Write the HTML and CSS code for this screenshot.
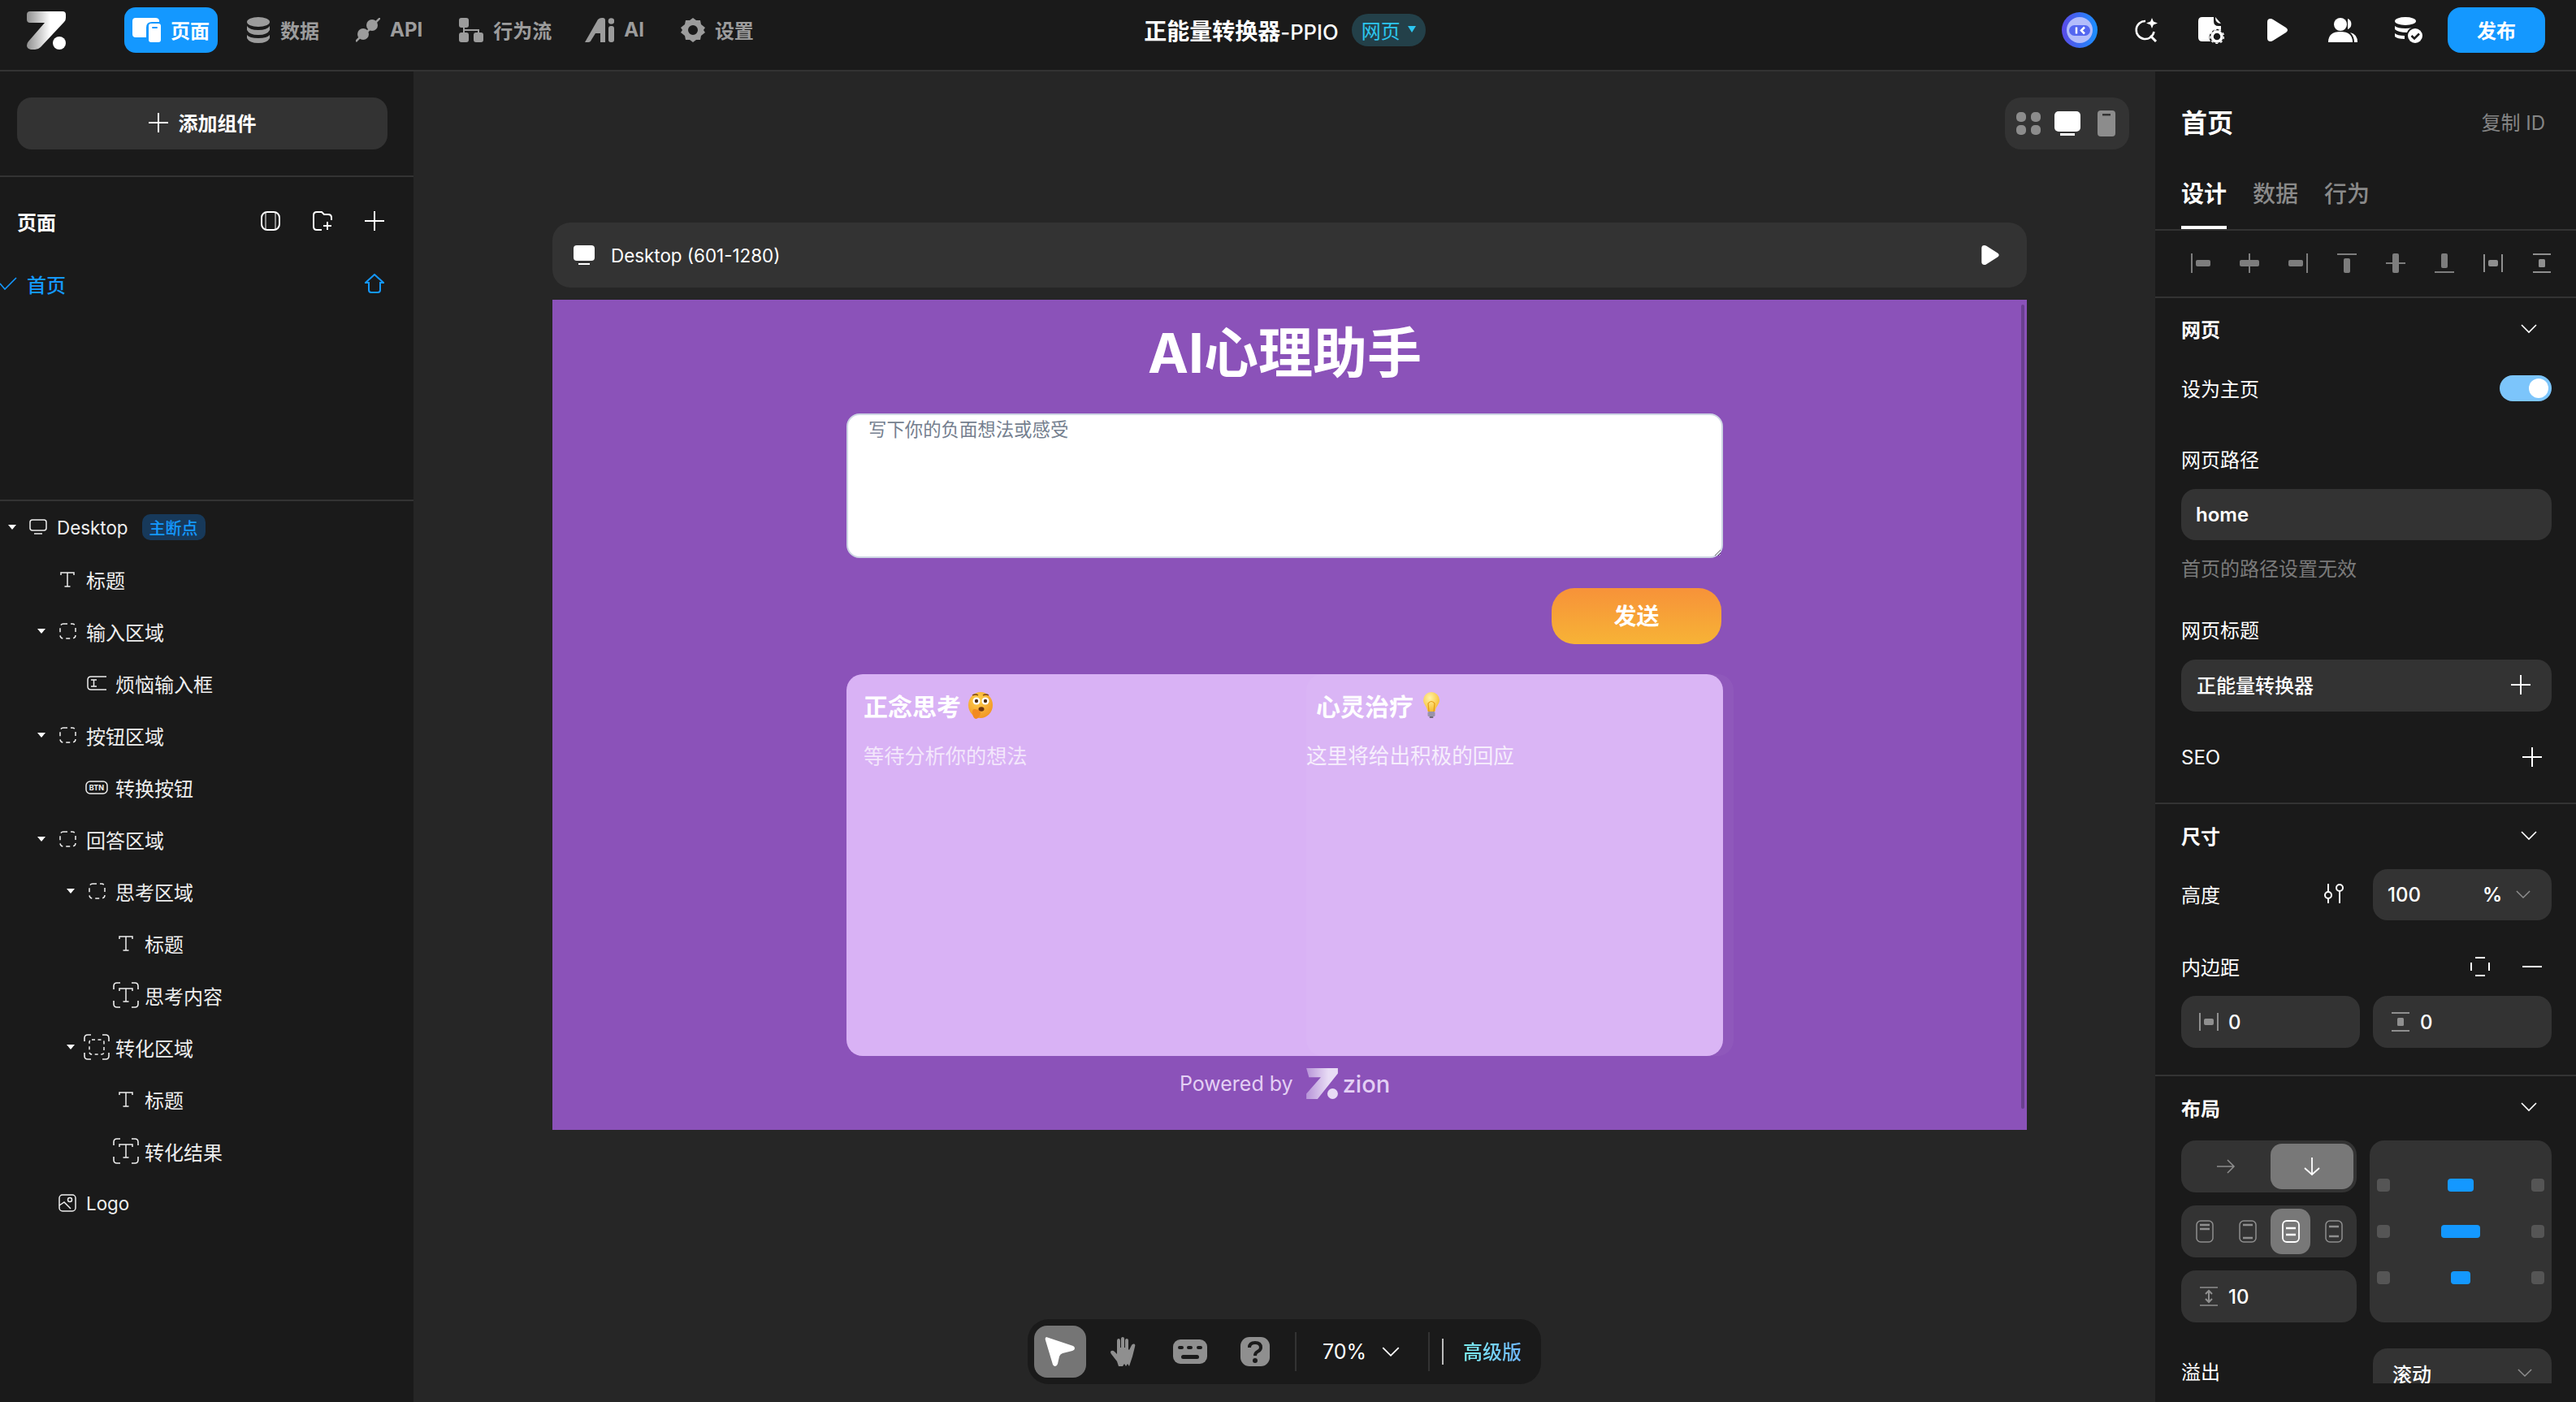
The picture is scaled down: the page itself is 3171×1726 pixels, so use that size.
FILE: index.html
```html
<!DOCTYPE html>
<html lang="zh-CN">
<head>
  <meta charset="UTF-8" />
  <title>正能量转换器-PPIO</title>
  <link rel="stylesheet" href="styles.css">
</head>
<body>
  <svg class="sprite" xmlns="http://www.w3.org/2000/svg">
    <defs>
      <linearGradient id="logoGrad" x1="0" y1="0" x2="1" y2="0">
        <stop offset="0" stop-color="#8f8f8f"/><stop offset="0.6" stop-color="#fff"/>
      </linearGradient>
      <linearGradient id="zionGrad" x1="0" y1="0" x2="1" y2="0">
        <stop offset="0" stop-color="#b794d8"/><stop offset="0.7" stop-color="#e8dcf5"/>
      </linearGradient>
      <linearGradient id="avatarGrad" x1="0" y1="0.5" x2="1" y2="0.5">
        <stop offset="0" stop-color="#5b4ae6"/><stop offset="1" stop-color="#1a90ff"/>
      </linearGradient>
      <radialGradient id="faceGrad" cx="0.4" cy="0.3" r="0.8">
        <stop offset="0" stop-color="#ffd24e"/><stop offset="1" stop-color="#f0901f"/>
      </radialGradient>
      <radialGradient id="bulbGrad" cx="0.4" cy="0.3" r="0.8">
        <stop offset="0" stop-color="#fff3a8"/><stop offset="1" stop-color="#f6b51e"/>
      </radialGradient>

      <symbol id="i-chev" viewBox="0 0 20 12"><path d="M1 1l9 9 9-9" fill="none" stroke="currentColor" stroke-width="1.6"/></symbol>
      <symbol id="i-plus" viewBox="0 0 24 24"><path d="M12 0v24M0 12h24" fill="none" stroke="currentColor" stroke-width="2"/></symbol>
      <symbol id="i-frame" viewBox="0 0 21 20"><rect x="1" y="1" width="19" height="18" rx="4" fill="none" stroke="currentColor" stroke-width="1.5" stroke-dasharray="5 4"/></symbol>
      <symbol id="i-t" viewBox="0 0 18 19"><path d="M1 4V1h16v3M9 1v17M5.500 18h7" fill="none" stroke="currentColor" stroke-width="1.5"/></symbol>
      <symbol id="i-tframe" viewBox="0 0 32 32"><path d="M1 9V5q0-4 4-4h4M23 1h4q4 0 4 4v4M31 23v4q0 4-4 4h-4M9 31H5q-4 0-4-4v-4" fill="none" stroke="currentColor" stroke-width="1.6"/><path d="M8 11V8h16v3M16 8v16M12.500 24h7" fill="none" stroke="currentColor" stroke-width="1.5"/></symbol>
      <symbol id="i-fframe" viewBox="0 0 32 32"><path d="M1 9V5q0-4 4-4h4M23 1h4q4 0 4 4v4M31 23v4q0 4-4 4h-4M9 31H5q-4 0-4-4v-4" fill="none" stroke="currentColor" stroke-width="1.6"/><rect x="7" y="7" width="18" height="18" rx="3" fill="none" stroke="currentColor" stroke-width="1.5" stroke-dasharray="4 3.500"/></symbol>
      <symbol id="i-gather" viewBox="0 0 24 24"><path d="M1 1v22M23 1v22" fill="none" stroke="currentColor" stroke-width="2"/><rect x="6" y="8" width="12" height="8" rx="2" fill="currentColor"/></symbol>
      <symbol id="i-gapv" viewBox="0 0 24 24"><path d="M1 1h22M1 23h22" fill="none" stroke="currentColor" stroke-width="2"/><rect x="8" y="7" width="8" height="10" rx="1.500" fill="currentColor"/></symbol>
    </defs>
  </svg>

  <div class="app">
    <header class="topbar">
      <div class="topbar-left">
        <svg class="logo" viewBox="0 0 48 47"><path d="M4 0h40q4 0 4 4v4q0 3-2 5L17 44q-3 3-7 3H5q-5-1-5-5 0-3 2-5L22 14H4q-4 0-4-4V4q0-4 4-4z" fill="url(#logoGrad)"/><circle cx="40" cy="39" r="8" fill="#fff"/></svg>
        <nav class="nav">
          <a class="nav-item active">
            <svg width="35" height="30" viewBox="0 0 35 30"><path d="M4 0h24q5 0 5 4v1H24q-7 0-7 7v12H4q-4 0-4-4V4q0-4 4-4z" fill="currentColor"/><rect x="20" y="7" width="15" height="23" rx="3" fill="currentColor"/><rect x="24" y="11" width="7" height="2" rx="1" fill="#1498ff"/></svg>
            页面
          </a>
          <a class="nav-item">
            <svg width="30" height="32" viewBox="0 0 30 32"><ellipse cx="15" cy="6" rx="14" ry="6" fill="currentColor"/><path d="M1 11q3 5 14 5t14-5v5q-3 6-14 6T1 16z" fill="currentColor"/><path d="M1 22q3 4 14 4t14-4v4q-3 6-14 6T1 26z" fill="currentColor"/></svg>
            数据
          </a>
          <a class="nav-item">
            <svg width="30" height="30" viewBox="0 0 30 30"><circle cx="9" cy="20" r="7" fill="currentColor"/><circle cx="20" cy="9" r="7" fill="currentColor"/><path d="M24 6l6-6M6 23l-6 6M14 17l3-3" stroke="currentColor" stroke-width="2.500"/></svg>
            API
          </a>
          <a class="nav-item">
            <svg width="30" height="30" viewBox="0 0 30 30"><rect x="0" y="0" width="12" height="12" rx="3" fill="currentColor"/><rect x="0" y="18" width="12" height="12" rx="3" fill="currentColor"/><rect x="18" y="18" width="12" height="12" rx="3" fill="currentColor"/><path d="M6 12v6M6 15h18v3" fill="none" stroke="currentColor" stroke-width="2"/></svg>
            行为流
          </a>
          <a class="nav-item nav-ai">
            <svg width="36" height="30" viewBox="0 0 36 30"><path d="M0 30L16 2q2-2 5-2h1q3 0 3 3v27h-6v-11h-6l-5 8q-1 3-4 3z" fill="currentColor"/><rect x="29" y="10" width="7" height="20" rx="3" fill="currentColor"/><circle cx="32.500" cy="4" r="3.800" fill="currentColor"/></svg>
            AI
          </a>
          <a class="nav-item">
            <svg width="30" height="30" viewBox="0 0 30 30"><path fill-rule="evenodd" d="M15 0l4 3 5 0 1 5 5 4-2 3 2 3-5 4-1 5-5 0-4 3-4-3-5 0-1-5-5-4 2-3-2-3 5-4 1-5 5 0zM15 9a6 6 0 100 12 6 6 0 000-12z" fill="currentColor"/></svg>
            设置
          </a>
        </nav>
      </div>

      <div class="topbar-center">
        <span class="app-name">正能量转换器<span class="app-suffix">-PPIO</span></span>
        <span class="app-type">网页<i class="app-type-arrow"></i></span>
      </div>

      <div class="topbar-right">
        <span class="top-icon">
          <svg width="44" height="44" viewBox="0 0 44 44"><circle cx="22" cy="22" r="22" fill="url(#avatarGrad)"/><circle cx="22" cy="22" r="16" fill="#b3bdfb"/><rect x="9" y="16" width="26" height="13" rx="6.500" fill="#5467f0"/><path d="M18 18.500v8" stroke="#fff" stroke-width="2.500"/><path d="M28 18.500l-4 4 4 4" fill="none" stroke="#fff" stroke-width="2.500"/></svg>
        </span>
        <span class="top-icon">
          <svg width="30" height="30" viewBox="0 0 30 30"><path d="M15 4a11 11 0 1010.500 13" fill="none" stroke="#fff" stroke-width="2.500"/><path d="M21 22l7 7" stroke="#fff" stroke-width="3"/><path d="M23 0l1.800 4.500L30 6.500 24.800 8.500 23 13l-1.800-4.500L16 6.500l5.200-2z" fill="#fff"/></svg>
        </span>
        <span class="top-icon">
          <svg width="32" height="33" viewBox="0 0 32 33"><path d="M5 0h14v5q0 6 6 6h3v5a10 10 0 00-13 14H5q-5 0-5-5V5q0-5 5-5z" fill="#fff"/><path d="M21 0l7 8q-7 0-7-8z" fill="#fff"/><circle cx="23" cy="24" r="6" fill="none" stroke="#fff" stroke-width="3.500"/><circle cx="23" cy="24" r="8.500" fill="none" stroke="#fff" stroke-width="1.500" stroke-dasharray="3 3"/></svg>
        </span>
        <span class="top-icon">
          <svg width="25" height="28" viewBox="0 0 25 28"><path d="M0 4q0-4 4-4 1.500 0 3 1l16 10q2 1.500 2 3t-2 3L7 27q-1.500 1-3 1-4 0-4-4z" fill="#fff"/></svg>
        </span>
        <span class="top-icon">
          <svg width="36" height="30" viewBox="0 0 36 30"><circle cx="15" cy="8" r="8" fill="#fff"/><path d="M0 30q0-13 15-13t15 13z" fill="#fff"/><path d="M24 1a7 7 0 010 13z" fill="#fff"/><path d="M27 18q9 2 9 12h-4q0-7-5-12z" fill="#fff"/></svg>
        </span>
        <span class="top-icon">
          <svg width="34" height="32" viewBox="0 0 34 32"><ellipse cx="13" cy="5" rx="13" ry="5" fill="#fff"/><path d="M0 11q3 3 13 3 5 0 8-1-4 1-6 6-11 0-15-4zM0 20q3 3 12 3v4Q3 27 0 24z" fill="#fff"/><circle cx="25" cy="23" r="9" fill="#fff"/><path d="M20.500 23l3.500 3.500 6-6" fill="none" stroke="#1a1a1a" stroke-width="2.500"/></svg>
        </span>
        <button class="publish">发布</button>
      </div>
    </header>

    <aside class="left-panel">
      <div class="add-area">
        <button class="add-btn"><svg width="24" height="24"><use href="#i-plus"/></svg>添加组件</button>
      </div>
      <div class="pages">
        <div class="pages-head">
          <b>页面</b>
          <div class="pages-tools">
            <svg width="24" height="24" viewBox="0 0 24 24"><rect x="1" y="1" width="22" height="22" rx="7" fill="none" stroke="#fff" stroke-width="2"/><path d="M6 1v22M18 1v22" fill="none" stroke="#fff" stroke-width="1"/></svg>
            <svg width="24" height="24" viewBox="0 0 24 24"><path d="M11 23H5q-4 0-4-4V5q0-4 4-4h6l3 3h5q4 0 4 4v3" fill="none" stroke="#fff" stroke-width="2"/><path d="M18 13v10M13 18h10" stroke="#fff" stroke-width="2"/></svg>
            <svg width="24" height="24"><use href="#i-plus"/></svg>
          </div>
        </div>
        <div class="page-row">
          <svg class="page-check" width="21" height="16" viewBox="0 0 21 16"><path d="M0 8l6 7L20 1" fill="none" stroke="#1498ff" stroke-width="1.600"/></svg>
          <span>首页</span>
          <svg class="page-home" width="24" height="24" viewBox="0 0 24 24"><path d="M1 11L12 1l11 10h-4v9q0 3-3 3H8q-3 0-3-3v-9z" fill="none" stroke="#1498ff" stroke-width="2"/></svg>
        </div>
      </div>
      <div class="tree">
        <div class="tree-row lv0"><i class="tree-arrow"></i><span class="tree-icon"><svg width="22" height="20" viewBox="0 0 22 20"><rect x="1" y="1" width="20" height="13" rx="3" fill="none" stroke="currentColor" stroke-width="1.500"/><path d="M6 18h10" stroke="currentColor" stroke-width="1.500"/></svg></span><span class="latin">Desktop</span><em class="main-tag">主断点</em></div>
        <div class="tree-row lv1"><i class="tree-slot"></i><span class="tree-icon"><svg width="18" height="19"><use href="#i-t"/></svg></span><span>标题</span></div>
        <div class="tree-row lv1"><i class="tree-arrow"></i><span class="tree-icon"><svg width="21" height="20"><use href="#i-frame"/></svg></span><span>输入区域</span></div>
        <div class="tree-row lv2"><i class="tree-slot"></i><span class="tree-icon"><svg width="25" height="18" viewBox="0 0 25 18"><path d="M24 1H5Q1 1 1 5v8q0 4 4 4h19" fill="none" stroke="currentColor" stroke-width="1.500"/><path d="M5 5h7M8.500 5v8M5 13h7" fill="none" stroke="currentColor" stroke-width="1.500"/></svg></span><span>烦恼输入框</span></div>
        <div class="tree-row lv1"><i class="tree-arrow"></i><span class="tree-icon"><svg width="21" height="20"><use href="#i-frame"/></svg></span><span>按钮区域</span></div>
        <div class="tree-row lv2"><i class="tree-slot"></i><span class="tree-icon"><svg width="28" height="17" viewBox="0 0 28 17"><rect x="1" y="1" width="26" height="15" rx="5" fill="none" stroke="currentColor" stroke-width="1.500"/><text x="14" y="12" font-size="9" font-weight="700" text-anchor="middle" fill="currentColor" font-family="Inter, sans-serif">BTN</text></svg></span><span>转换按钮</span></div>
        <div class="tree-row lv1"><i class="tree-arrow"></i><span class="tree-icon"><svg width="21" height="20"><use href="#i-frame"/></svg></span><span>回答区域</span></div>
        <div class="tree-row lv2"><i class="tree-arrow"></i><span class="tree-icon"><svg width="21" height="20"><use href="#i-frame"/></svg></span><span>思考区域</span></div>
        <div class="tree-row lv3"><i class="tree-slot"></i><span class="tree-icon"><svg width="18" height="19"><use href="#i-t"/></svg></span><span>标题</span></div>
        <div class="tree-row lv3"><i class="tree-slot"></i><span class="tree-icon"><svg width="32" height="32"><use href="#i-tframe"/></svg></span><span>思考内容</span></div>
        <div class="tree-row lv2"><i class="tree-arrow"></i><span class="tree-icon"><svg width="32" height="32"><use href="#i-fframe"/></svg></span><span>转化区域</span></div>
        <div class="tree-row lv3"><i class="tree-slot"></i><span class="tree-icon"><svg width="18" height="19"><use href="#i-t"/></svg></span><span>标题</span></div>
        <div class="tree-row lv3"><i class="tree-slot"></i><span class="tree-icon"><svg width="32" height="32"><use href="#i-tframe"/></svg></span><span>转化结果</span></div>
        <div class="tree-row lv1"><i class="tree-slot"></i><span class="tree-icon"><svg width="22" height="22" viewBox="0 0 22 22"><rect x="1" y="1" width="20" height="20" rx="4" fill="none" stroke="currentColor" stroke-width="1.500"/><circle cx="14" cy="7" r="2.500" fill="none" stroke="currentColor" stroke-width="1.500"/><path d="M1 14l6-4 8 8" fill="none" stroke="currentColor" stroke-width="1.500"/></svg></span><span class="latin">Logo</span></div>
      </div>
    </aside>

    <main class="canvas">
      <div class="view-switch">
        <span class="view-btn"><svg width="32" height="30" viewBox="0 0 32 30"><rect x="1" y="1" width="12" height="12" rx="5" fill="#8c8c8c"/><rect x="19" y="1" width="12" height="12" rx="5" fill="#8c8c8c"/><rect x="1" y="17" width="12" height="12" rx="5" fill="#8c8c8c"/><rect x="19" y="17" width="12" height="12" rx="5" fill="#8c8c8c"/></svg></span>
        <span class="view-btn"><svg width="32" height="30" viewBox="0 0 32 30"><rect x="0" y="0" width="32" height="25" rx="5" fill="#fff"/><rect x="7" y="27" width="18" height="3" fill="#fff"/></svg></span>
        <span class="view-btn"><svg width="22" height="32" viewBox="0 0 22 32"><rect x="0" y="0" width="22" height="32" rx="4" fill="#8c8c8c"/><rect x="6" y="4" width="10" height="2.500" fill="#333"/></svg></span>
      </div>

      <div class="bp-bar">
        <svg width="26" height="26" viewBox="0 0 26 26"><rect x="0" y="1" width="26" height="19" rx="4" fill="#fff"/><rect x="6" y="23" width="14" height="2" fill="#fff"/></svg>
        <span class="latin">Desktop (601-1280)</span>
        <svg class="bp-play" width="22" height="24" viewBox="0 0 25 28"><path d="M0 4q0-4 4-4 1.500 0 3 1l16 10q2 1.500 2 3t-2 3L7 27q-1.500 1-3 1-4 0-4-4z" fill="#fff"/></svg>
      </div>

      <section class="page">
        <i class="page-scroll"></i>
        <h1 class="page-title">AI心理助手</h1>
        <textarea class="worry-input" placeholder="写下你的负面想法或感受"></textarea>
        <button class="send-btn">发送</button>
        <div class="answers">
          <div class="answer answer-left">
            <h3>正念思考
              <svg width="32" height="33" viewBox="0 0 32 33"><ellipse cx="16" cy="16" rx="15" ry="16" fill="url(#faceGrad)"/><circle cx="11" cy="11" r="4.500" fill="#fff"/><circle cx="22" cy="11" r="4.500" fill="#fff"/><circle cx="11" cy="11" r="2.200" fill="#4a2c12"/><circle cx="22" cy="11" r="2.200" fill="#4a2c12"/><path d="M6 4q4-2 7 0M19 4q4-2 7 0" fill="none" stroke="#7a4310" stroke-width="1.300"/><ellipse cx="17" cy="21" rx="3.500" ry="2.800" fill="#6d3410"/><path d="M6 24q0-3 3-3l4 1q3 1 3 3t-1 4q-2 4-5 4-4-1-4-9z" fill="#f28a1f"/></svg>
            </h3>
            <p>等待分析你的想法</p>
          </div>
          <div class="answer answer-right">
            <h3>心灵治疗
              <svg width="20" height="32" viewBox="0 0 20 32"><path d="M10 0a10 10 0 00-10 10c0 5 5 8 5.500 14h9C15 18 20 15 20 10A10 10 0 0010 0z" fill="url(#bulbGrad)"/><path d="M7 24l-1-10q4-5 8 0l-1 10" fill="none" stroke="#e39a14" stroke-width="1.200"/><rect x="5.500" y="24" width="9" height="6" rx="1.500" fill="#9a93a8"/><rect x="7.500" y="30" width="5" height="2" rx="1" fill="#6f6a78"/></svg>
            </h3>
            <p>这里将给出积极的回应</p>
          </div>
        </div>
        <div class="powered">
          <span>Powered by</span>
          <svg width="41" height="38" viewBox="0 0 48 47"><path d="M0 0h48v8L17 47H0v-8L22 14H4z" fill="url(#zionGrad)"/><circle cx="40" cy="39" r="8" fill="#e8dcf5"/></svg>
          <span class="zion">zion</span>
        </div>
      </section>

      <div class="tools">
        <span class="tool selected"><svg width="38" height="38" viewBox="0 0 38 38"><path d="M2 1q-2 1-1 4l9 30q1 2 3 2t3-3l2-9q1-3 4-4l12-3q3-1 3-3t-2-3z" fill="#fff"/></svg></span>
        <span class="tool"><svg width="36" height="36" viewBox="0 0 36 36"><path d="M10 36l-2-6-7-9q-2-3 0-4t4 1l3 3V5q0-3 2-3t2 3v8h1V2q0-2 2-2t2 2v11h1V4q0-2 2-2t2 2v11l1 1 3-6q1-2 3-1.500t1 3.500l-3 12-4 12-2-3-2 3-2-3-2 3z" fill="#8f8f8f"/></svg></span>
        <span class="tool"><svg width="42" height="30" viewBox="0 0 42 30"><rect width="42" height="30" rx="9" fill="#8f8f8f"/><g fill="#1a1a1a"><rect x="6" y="8" width="7" height="4" rx="2"/><rect x="17" y="8" width="7" height="4" rx="2"/><rect x="29" y="8" width="7" height="4" rx="2"/><rect x="10" y="19" width="22" height="5" rx="2.500"/></g></svg></span>
        <span class="tool"><svg width="36" height="36" viewBox="0 0 36 36"><rect width="36" height="36" rx="11" fill="#8f8f8f"/><path d="M11 13q0-6 7-6t7 6q0 3-4 5-3 1.500-3 5" fill="none" stroke="#1a1a1a" stroke-width="4"/><circle cx="18" cy="29" r="3" fill="#1a1a1a"/></svg></span>
        <i class="tool-sep"></i>
        <span class="zoom-val">70%</span>
        <svg class="zoom-chev" width="22" height="13"><use href="#i-chev"/></svg>
        <i class="tool-sep tool-sep-b"></i>
        <i class="tool-sep tool-sep-w"></i>
        <span class="pro">高级版</span>
      </div>
    </main>

    <aside class="right-panel">
      <div class="props">
        <div class="props-head"><b>首页</b><span>复制 ID</span></div>
        <div class="tabs">
          <span class="tab on">设计</span><span class="tab">数据</span><span class="tab">行为</span>
        </div>
        <div class="aligns">
          <svg width="24" height="24" viewBox="0 0 24 24"><path d="M1 0v24" stroke="#7d7d7d" stroke-width="2"/><rect x="6" y="8" width="18" height="8" rx="2" fill="#7d7d7d"/></svg>
          <svg width="24" height="24" viewBox="0 0 24 24"><path d="M12 0v24" stroke="#7d7d7d" stroke-width="2"/><rect x="0" y="8" width="24" height="8" rx="2" fill="#7d7d7d"/></svg>
          <svg width="24" height="24" viewBox="0 0 24 24"><path d="M23 0v24" stroke="#7d7d7d" stroke-width="2"/><rect x="0" y="8" width="18" height="8" rx="2" fill="#7d7d7d"/></svg>
          <svg width="24" height="24" viewBox="0 0 24 24"><path d="M0 1h24" stroke="#7d7d7d" stroke-width="2"/><rect x="8" y="6" width="8" height="18" rx="2" fill="#7d7d7d"/></svg>
          <svg width="24" height="24" viewBox="0 0 24 24"><path d="M0 12h24" stroke="#7d7d7d" stroke-width="2"/><rect x="8" y="0" width="8" height="24" rx="2" fill="#7d7d7d"/></svg>
          <svg width="24" height="24" viewBox="0 0 24 24"><path d="M0 23h24" stroke="#7d7d7d" stroke-width="2"/><rect x="8" y="0" width="8" height="18" rx="2" fill="#7d7d7d"/></svg>
          <svg width="24" height="24" class="muted"><use href="#i-gather"/></svg>
          <svg width="24" height="24" class="muted"><use href="#i-gapv"/></svg>
        </div>

        <section class="sect sect-web">
          <div class="sect-head"><b>网页</b><svg width="20" height="12"><use href="#i-chev"/></svg></div>
          <div class="row-home"><span>设为主页</span><i class="switch"><i class="knob"></i></i></div>
          <div class="label l-path">网页路径</div>
          <div class="field f-home">home</div>
          <div class="hint">首页的路径设置无效</div>
          <div class="label l-title">网页标题</div>
          <div class="field f-title"><span>正能量转换器</span><svg width="24" height="24"><use href="#i-plus"/></svg></div>
          <div class="row-seo"><span>SEO</span><svg width="24" height="24"><use href="#i-plus"/></svg></div>
        </section>

        <section class="sect sect-size">
          <div class="sect-head"><b>尺寸</b><svg width="20" height="12"><use href="#i-chev"/></svg></div>
          <div class="two">
            <div class="row-height"><span>高度</span><svg width="24" height="24" viewBox="0 0 24 24"><path d="M5 0v9M5 19v5M19 10v14" fill="none" stroke="#fff" stroke-width="2"/><circle cx="5" cy="14" r="4" fill="none" stroke="#fff" stroke-width="2"/><circle cx="19" cy="5" r="4" fill="none" stroke="#fff" stroke-width="2"/></svg></div>
            <div class="field f-num"><span>100</span><span class="unit">%</span><svg class="muted" width="18" height="11"><use href="#i-chev"/></svg></div>
          </div>
          <div class="row-pad"><span>内边距</span>
            <div class="row-pad-tools">
              <svg width="24" height="24" viewBox="0 0 24 24"><path d="M6 1h12M6 23h12M1 7v10M23 7v10" fill="none" stroke="#fff" stroke-width="2"/></svg>
              <svg width="24" height="24" viewBox="0 0 24 24"><path d="M0 12h24" stroke="#fff" stroke-width="2"/></svg>
            </div>
          </div>
          <div class="two two-pad">
            <div class="field f-pad"><svg class="muted" width="24" height="24"><use href="#i-gather"/></svg><span>0</span></div>
            <div class="field f-pad"><svg class="muted" width="24" height="24"><use href="#i-gapv"/></svg><span>0</span></div>
          </div>
        </section>

        <section class="sect-last">
          <div class="sect-head"><b>布局</b><svg width="20" height="12"><use href="#i-chev"/></svg></div>
          <div class="layout">
            <div class="layout-left">
              <div class="seg">
                <span class="seg-btn"><svg class="muted" width="24" height="20" viewBox="0 0 24 20"><path d="M1 10h21M14 2l8 8-8 8" fill="none" stroke="currentColor" stroke-width="1.500"/></svg></span>
                <span class="seg-btn on"><svg width="22" height="24" viewBox="0 0 22 24"><path d="M11 1v21M2 14l9 8 9-8" fill="none" stroke="#fff" stroke-width="1.800"/></svg></span>
              </div>
              <div class="seg seg-four">
                <span class="seg-btn"><svg class="muted" width="22" height="28" viewBox="0 0 22 28"><rect x="1" y="1" width="20" height="26" rx="5" fill="none" stroke="currentColor" stroke-width="1.500"/><path d="M5 6h12M5 11h12" stroke="currentColor" stroke-width="2.500"/></svg></span>
                <span class="seg-btn"><svg class="muted" width="22" height="28" viewBox="0 0 22 28"><rect x="1" y="1" width="20" height="26" rx="5" fill="none" stroke="currentColor" stroke-width="1.500"/><path d="M5 6h12M5 22h12" stroke="currentColor" stroke-width="2.500"/></svg></span>
                <span class="seg-btn on"><svg width="22" height="28" viewBox="0 0 22 28"><rect x="1" y="1" width="20" height="26" rx="5" fill="none" stroke="#fff" stroke-width="1.800"/><path d="M5 10h12M5 18h12" stroke="#fff" stroke-width="2.500"/></svg></span>
                <span class="seg-btn"><svg class="muted" width="22" height="28" viewBox="0 0 22 28"><rect x="1" y="1" width="20" height="26" rx="5" fill="none" stroke="currentColor" stroke-width="1.500"/><path d="M5 8h12M5 20h12" stroke="currentColor" stroke-width="2.500"/></svg></span>
              </div>
              <div class="field f-gap">
                <svg class="muted" width="24" height="24" viewBox="0 0 24 24"><path d="M1 1h22M1 23h22" fill="none" stroke="currentColor" stroke-width="1.500"/><path d="M12 5v14M8 9l4-4 4 4M8 15l4 4 4-4" fill="none" stroke="currentColor" stroke-width="2"/></svg>
                <span>10</span>
              </div>
            </div>
            <div class="layout-box">
              <div class="lb-row"><i class="dot"></i><i class="bar bar-m"></i><i class="dot"></i></div>
              <div class="lb-row"><i class="dot"></i><i class="bar bar-l"></i><i class="dot"></i></div>
              <div class="lb-row"><i class="dot"></i><i class="bar bar-s"></i><i class="dot"></i></div>
            </div>
          </div>
          <div class="two two-over">
            <div class="over-label">溢出</div>
            <div class="field f-over"><span>滚动</span><svg class="muted" width="18" height="11"><use href="#i-chev"/></svg></div>
          </div>
        </section>
      </div>
    </aside>
  </div>
</body>
</html>
```

FILE: styles.css
```css
* {
  box-sizing: border-box;
}
html, body {
  margin: 0;
  height: 100%;
  overflow: hidden;
}
body {
  background: #1a1a1a;
  color: #fff;
  font-family: Inter, "Noto Sans CJK SC", sans-serif;
  font-size: 24px;
}
i, em {
  font-style: normal;
  display: block;
}
svg {
  display: block;
  flex-shrink: 0;
}
.sprite {
  position: absolute;
  width: 0;
  height: 0;
}
.muted {
  color: #8f8f8f;
}
.latin {
  font-size: 22.4px;
}
.app {
  display: grid;
  grid-template-columns: 509px 1fr 518px;
  grid-template-rows: 88px 1fr;
  height: 100vh;
}

/* top bar */
.topbar {
  grid-column: 1 / 4;
  display: grid;
  grid-template-columns: 1fr auto 1fr;
  align-items: center;
  padding: 0 38px 12px 30px;
  border-bottom: 2px solid #333;
}
.topbar-left {
  display: flex;
  align-items: center;
}
.logo {
  width: 48px;
  height: 47px;
  margin-left: 3px;
}
.nav {
  display: flex;
  align-items: center;
  gap: 25px;
  margin-left: 72px;
}
.nav-item {
  display: flex;
  align-items: center;
  gap: 12px;
  height: 56px;
  padding: 0 10px 2px;
  border-radius: 14px;
  color: #9c9c9c;
  font-weight: 700;
}
.nav-item svg {
  margin-top: 2px;
}
.nav-item.active {
  background: #1498ff;
  color: #fff;
}
.nav-ai {
  margin-left: -4px;
}
.topbar-center {
  display: flex;
  align-items: center;
  gap: 16px;
}
.app-name {
  font-size: 28px;
  font-weight: 700;
}
.app-suffix {
  font-size: 25.6px;
  font-weight: 500;
}
.app-type {
  display: flex;
  align-items: center;
  gap: 9px;
  height: 40px;
  padding: 0 12px 2px;
  border-radius: 20px;
  background: #234049;
  color: #2cc6f0;
}
.app-type-arrow {
  width: 0;
  height: 0;
  border-left: 5px solid transparent;
  border-right: 5px solid transparent;
  border-top: 8px solid #2cc6f0;
}
.topbar-right {
  display: flex;
  align-items: center;
  justify-content: flex-end;
  gap: 45px;
}
.top-icon {
  display: flex;
  justify-content: center;
  width: 36px;
}
.publish {
  width: 120px;
  height: 56px;
  margin-left: -15px;
  padding: 0 0 2px;
  border: none;
  border-radius: 16px;
  background: #1498ff;
  color: #fff;
  font: inherit;
  font-weight: 700;
}

/* left panel */
.left-panel {
  background: #1a1a1a;
  overflow: hidden;
}
.add-area {
  padding: 32px 32px 32px 21px;
  border-bottom: 2px solid #333;
}
.add-btn {
  display: flex;
  align-items: center;
  justify-content: center;
  gap: 13px;
  width: 100%;
  height: 64px;
  padding: 0 0 3px;
  border: none;
  border-radius: 18px;
  background: #333;
  color: #fff;
  font: inherit;
  font-weight: 700;
}
.pages {
  height: 399px;
  padding-top: 22px;
  border-bottom: 2px solid #333;
}
.pages-head {
  display: flex;
  align-items: center;
  justify-content: space-between;
  height: 64px;
  padding: 0 36px 0 21px;
}
.pages-tools {
  display: flex;
  gap: 40px;
}
.page-row {
  display: flex;
  align-items: center;
  height: 64px;
  margin-top: 13px;
  padding-right: 36px;
  color: #1498ff;
  font-weight: 500;
}
.page-check {
  margin-right: 12px;
}
.page-home {
  margin-left: auto;
}
.tree {
  padding-top: 1px;
}
.tree-row {
  display: flex;
  align-items: center;
  height: 64px;
  padding-bottom: 2px;
  color: #eee;
}
.lv0 { padding-left: 10px; }
.lv1 { padding-left: 46px; }
.lv2 { padding-left: 82px; }
.lv3 { padding-left: 118px; }
.tree-arrow, .tree-slot {
  width: 26px;
  flex-shrink: 0;
}
.tree-arrow::before {
  content: "";
  display: block;
  width: 0;
  border-left: 5px solid transparent;
  border-right: 5px solid transparent;
  border-top: 6px solid #fff;
}
.tree-icon {
  display: flex;
  justify-content: center;
  width: 22px;
  margin-right: 12px;
  flex-shrink: 0;
}
.main-tag {
  display: flex;
  align-items: center;
  height: 32px;
  margin-left: 17px;
  padding: 0 9px;
  border-radius: 10px;
  background: #17395a;
  color: #1498ff;
  font-size: 20px;
  font-weight: 500;
}

/* canvas */
.canvas {
  position: relative;
  padding: 186px 158px 0 171px;
  background: #262626;
}
.view-switch {
  position: absolute;
  top: 32px;
  left: 1959px;
  display: flex;
  align-items: center;
  gap: 16px;
  width: 153px;
  height: 64px;
  padding: 0 13px;
  border-radius: 20px;
  background: #333;
}
.view-btn {
  display: flex;
  justify-content: center;
  width: 32px;
}
.bp-bar {
  display: flex;
  align-items: center;
  gap: 20px;
  height: 80px;
  padding: 0 34px 0 26px;
  border-radius: 22px;
  background: #333;
}
.bp-play {
  margin-left: auto;
}
.page {
  position: relative;
  display: flex;
  flex-direction: column;
  align-items: center;
  height: 1022px;
  margin-top: 15px;
  padding: 26px 12px 0 0;
  background: #8b52b9;
}
.page-scroll {
  position: absolute;
  top: 6px;
  right: 3px;
  width: 4px;
  height: 990px;
  border-radius: 2px;
  background: #6a4090;
}
.page-title {
  margin: 0;
  font-size: 67px;
  font-weight: 700;
  line-height: 80px;
}
.worry-input {
  display: block;
  width: 1079px;
  height: 178px;
  margin-top: 34px;
  padding: 2px 25px;
  border: 2px solid #cdd5e3;
  border-radius: 16px;
  background: #fff;
  font: 22.4px/1.4 Inter, "Noto Sans CJK SC", sans-serif;
}
.worry-input::placeholder {
  color: #757f8f;
}
.send-btn {
  align-self: flex-end;
  width: 209px;
  height: 69px;
  margin: 37px 364px 0 0;
  padding: 0 0 3px;
  border: none;
  border-radius: 28px;
  background: linear-gradient(180deg, #f79239, #f7b336);
  color: #fff;
  font: inherit;
  font-size: 28px;
  font-weight: 700;
}
.answers {
  display: grid;
  grid-template-columns: 566px 526px;
  width: 1079px;
  height: 470px;
  margin-top: 37px;
  border-radius: 20px;
  background: #d9b2f5;
}
.answer {
  color: #fff;
}
.answer h3 {
  display: flex;
  align-items: center;
  gap: 8px;
  height: 40px;
  margin: 18px 0 0;
  font-size: 30px;
  font-weight: 700;
}
.answer p {
  height: 40px;
  margin: 23px 0 0;
  font-size: 25.2px;
  line-height: 40px;
  color: rgba(255, 255, 255, 0.7);
}
.answer-left {
  padding-left: 21px;
}
.answer-right {
  border-radius: 20px;
  background: rgba(255, 255, 255, 0.04);
}
.answer-right h3 {
  margin-left: 12px;
  gap: 12px;
}
.answer-right p {
  font-size: 25.6px;
  color: rgba(255, 255, 255, 0.8);
}
.powered {
  display: flex;
  align-items: center;
  gap: 15px;
  height: 38px;
  margin-top: 15px;
  color: #e3cff4;
  font-size: 25px;
}
.zion {
  margin-left: -10px;
  font-size: 29px;
  font-weight: 500;
}
.tools {
  position: absolute;
  top: 1536px;
  left: 756px;
  display: flex;
  align-items: center;
  gap: 16px;
  width: 632px;
  height: 80px;
  padding: 0 8px;
  border-radius: 26px;
  background: #1a1a1a;
}
.tool {
  display: flex;
  align-items: center;
  justify-content: center;
  width: 64px;
  height: 64px;
  border-radius: 16px;
}
.tool.selected {
  background: #757575;
}
.tool-sep {
  width: 2px;
  height: 48px;
  margin-left: 1px;
  background: #333;
}
.tool-sep-b {
  margin-left: 19px;
}
.tool-sep-w {
  height: 32px;
  margin-left: -1px;
  background: #bbb;
}
.zoom-val {
  margin-left: 16px;
  font-size: 25px;
}
.zoom-chev {
  width: 22px;
  margin-left: 3px;
}
.pro {
  margin-left: 8px;
  padding-bottom: 3px;
  font-weight: 500;
  background: linear-gradient(90deg, #7df0f0, #6eb6ff);
  -webkit-background-clip: text;
  background-clip: text;
  color: transparent;
}

/* right panel */
.right-panel {
  background: #1a1a1a;
}
.props {
  height: 1615px;
  overflow: hidden;
}
.props-head {
  display: flex;
  align-items: center;
  justify-content: space-between;
  height: 124px;
  padding: 0 38px 2px 32px;
}
.props-head b {
  font-size: 32px;
}
.props-head span {
  color: #858585;
}
.tabs {
  display: flex;
  gap: 32px;
  height: 72px;
  padding: 0 0 0 32px;
  border-bottom: 2px solid #333;
}
.tab {
  height: 70px;
  padding-top: 5px;
  font-size: 28px;
  font-weight: 500;
  color: #8a8a8a;
}
.tab.on {
  border-bottom: 4px solid #fff;
  font-weight: 700;
  color: #fff;
}
.aligns {
  display: flex;
  align-items: center;
  gap: 36px;
  height: 83px;
  padding: 0 0 2px 44px;
  border-bottom: 2px solid #333;
}
.sect, .sect-last {
  padding: 0 30px 0 32px;
}
.sect {
  border-bottom: 2px solid #333;
}
.sect-head {
  display: flex;
  align-items: center;
  justify-content: space-between;
  padding: 0 18px 3px 0;
}
.sect-head b {
  font-weight: 700;
}
.sect-web .sect-head {
  height: 78px;
}
.sect-size .sect-head {
  height: 80px;
}
.sect-last .sect-head {
  height: 79px;
}
.row-home, .row-seo, .row-pad {
  display: flex;
  align-items: center;
  justify-content: space-between;
}
.row-home {
  height: 68px;
  padding-bottom: 3px;
}
.switch {
  display: flex;
  justify-content: flex-end;
  align-items: center;
  width: 64px;
  height: 32px;
  padding-right: 4px;
  border-radius: 16px;
  background: #7cc5fb;
}
.knob {
  width: 24px;
  height: 24px;
  border-radius: 50%;
  background: #fff;
}
.label, .hint {
  height: 40px;
  line-height: 40px;
}
.l-path {
  margin-top: 34px;
}
.l-title {
  margin-top: 36px;
}
.hint {
  margin-top: 16px;
  color: #7a7a7a;
}
.field {
  display: flex;
  align-items: center;
  height: 64px;
  border-radius: 18px;
  background: #333;
}
.f-home {
  height: 63px;
  margin-top: 15px;
  padding-left: 18px;
  font-weight: 600;
}
.f-title {
  justify-content: space-between;
  margin-top: 15px;
  padding: 0 26px 3px 19px;
  font-weight: 500;
}
.row-seo {
  height: 40px;
  margin-top: 36px;
  margin-bottom: 36px;
  padding-right: 12px;
}
.two {
  display: grid;
  grid-template-columns: 220px 220px;
  gap: 16px;
  align-items: center;
}
.row-height {
  display: flex;
  align-items: center;
  justify-content: space-between;
  padding: 0 20px 3px 0;
}
.f-num {
  height: 63px;
  padding: 0 26px 0 18px;
  font-weight: 500;
}
.unit {
  margin-left: auto;
  margin-right: 17px;
  font-weight: 600;
}
.row-pad {
  height: 40px;
  margin-top: 38px;
  padding: 0 12px 3px 0;
}
.row-pad-tools {
  display: flex;
  gap: 40px;
}
.two-pad {
  margin-top: 15px;
  margin-bottom: 33px;
}
.f-pad {
  gap: 12px;
  padding-left: 22px;
  font-weight: 500;
}
.layout {
  display: grid;
  grid-template-columns: 216px 224px;
  gap: 16px;
}
.layout-left {
  display: flex;
  flex-direction: column;
  gap: 16px;
}
.seg {
  display: grid;
  grid-template-columns: 110px 102px;
  align-items: center;
  height: 64px;
  padding-right: 4px;
  border-radius: 18px;
  background: #333;
}
.seg-four {
  grid-template-columns: repeat(4, 53px);
  padding: 0 0 0 2px;
}
.seg-btn {
  display: flex;
  align-items: center;
  justify-content: center;
  height: 56px;
  border-radius: 14px;
}
.seg-btn.on {
  background: #787878;
}
.seg-four .seg-btn {
  margin: 0 2px;
}
.f-gap {
  gap: 12px;
  padding-left: 22px;
  font-weight: 500;
}
.layout-box {
  display: flex;
  flex-direction: column;
  justify-content: center;
  gap: 41px;
  height: 224px;
  padding: 0 9px;
  border-radius: 18px;
  background: #333;
}
.lb-row {
  display: flex;
  align-items: center;
  justify-content: space-between;
}
.dot {
  width: 16px;
  height: 16px;
  border-radius: 4px;
  background: #555;
}
.bar {
  height: 16px;
  border-radius: 4px;
  background: #1498ff;
}
.bar-m { width: 32px; }
.bar-l { width: 48px; }
.bar-s { width: 24px; }
.two-over {
  margin-top: 32px;
}
.over-label {
  height: 64px;
  line-height: 60px;
}
.f-over {
  justify-content: space-between;
  padding: 0 24px 3px;
  font-weight: 500;
}
```
